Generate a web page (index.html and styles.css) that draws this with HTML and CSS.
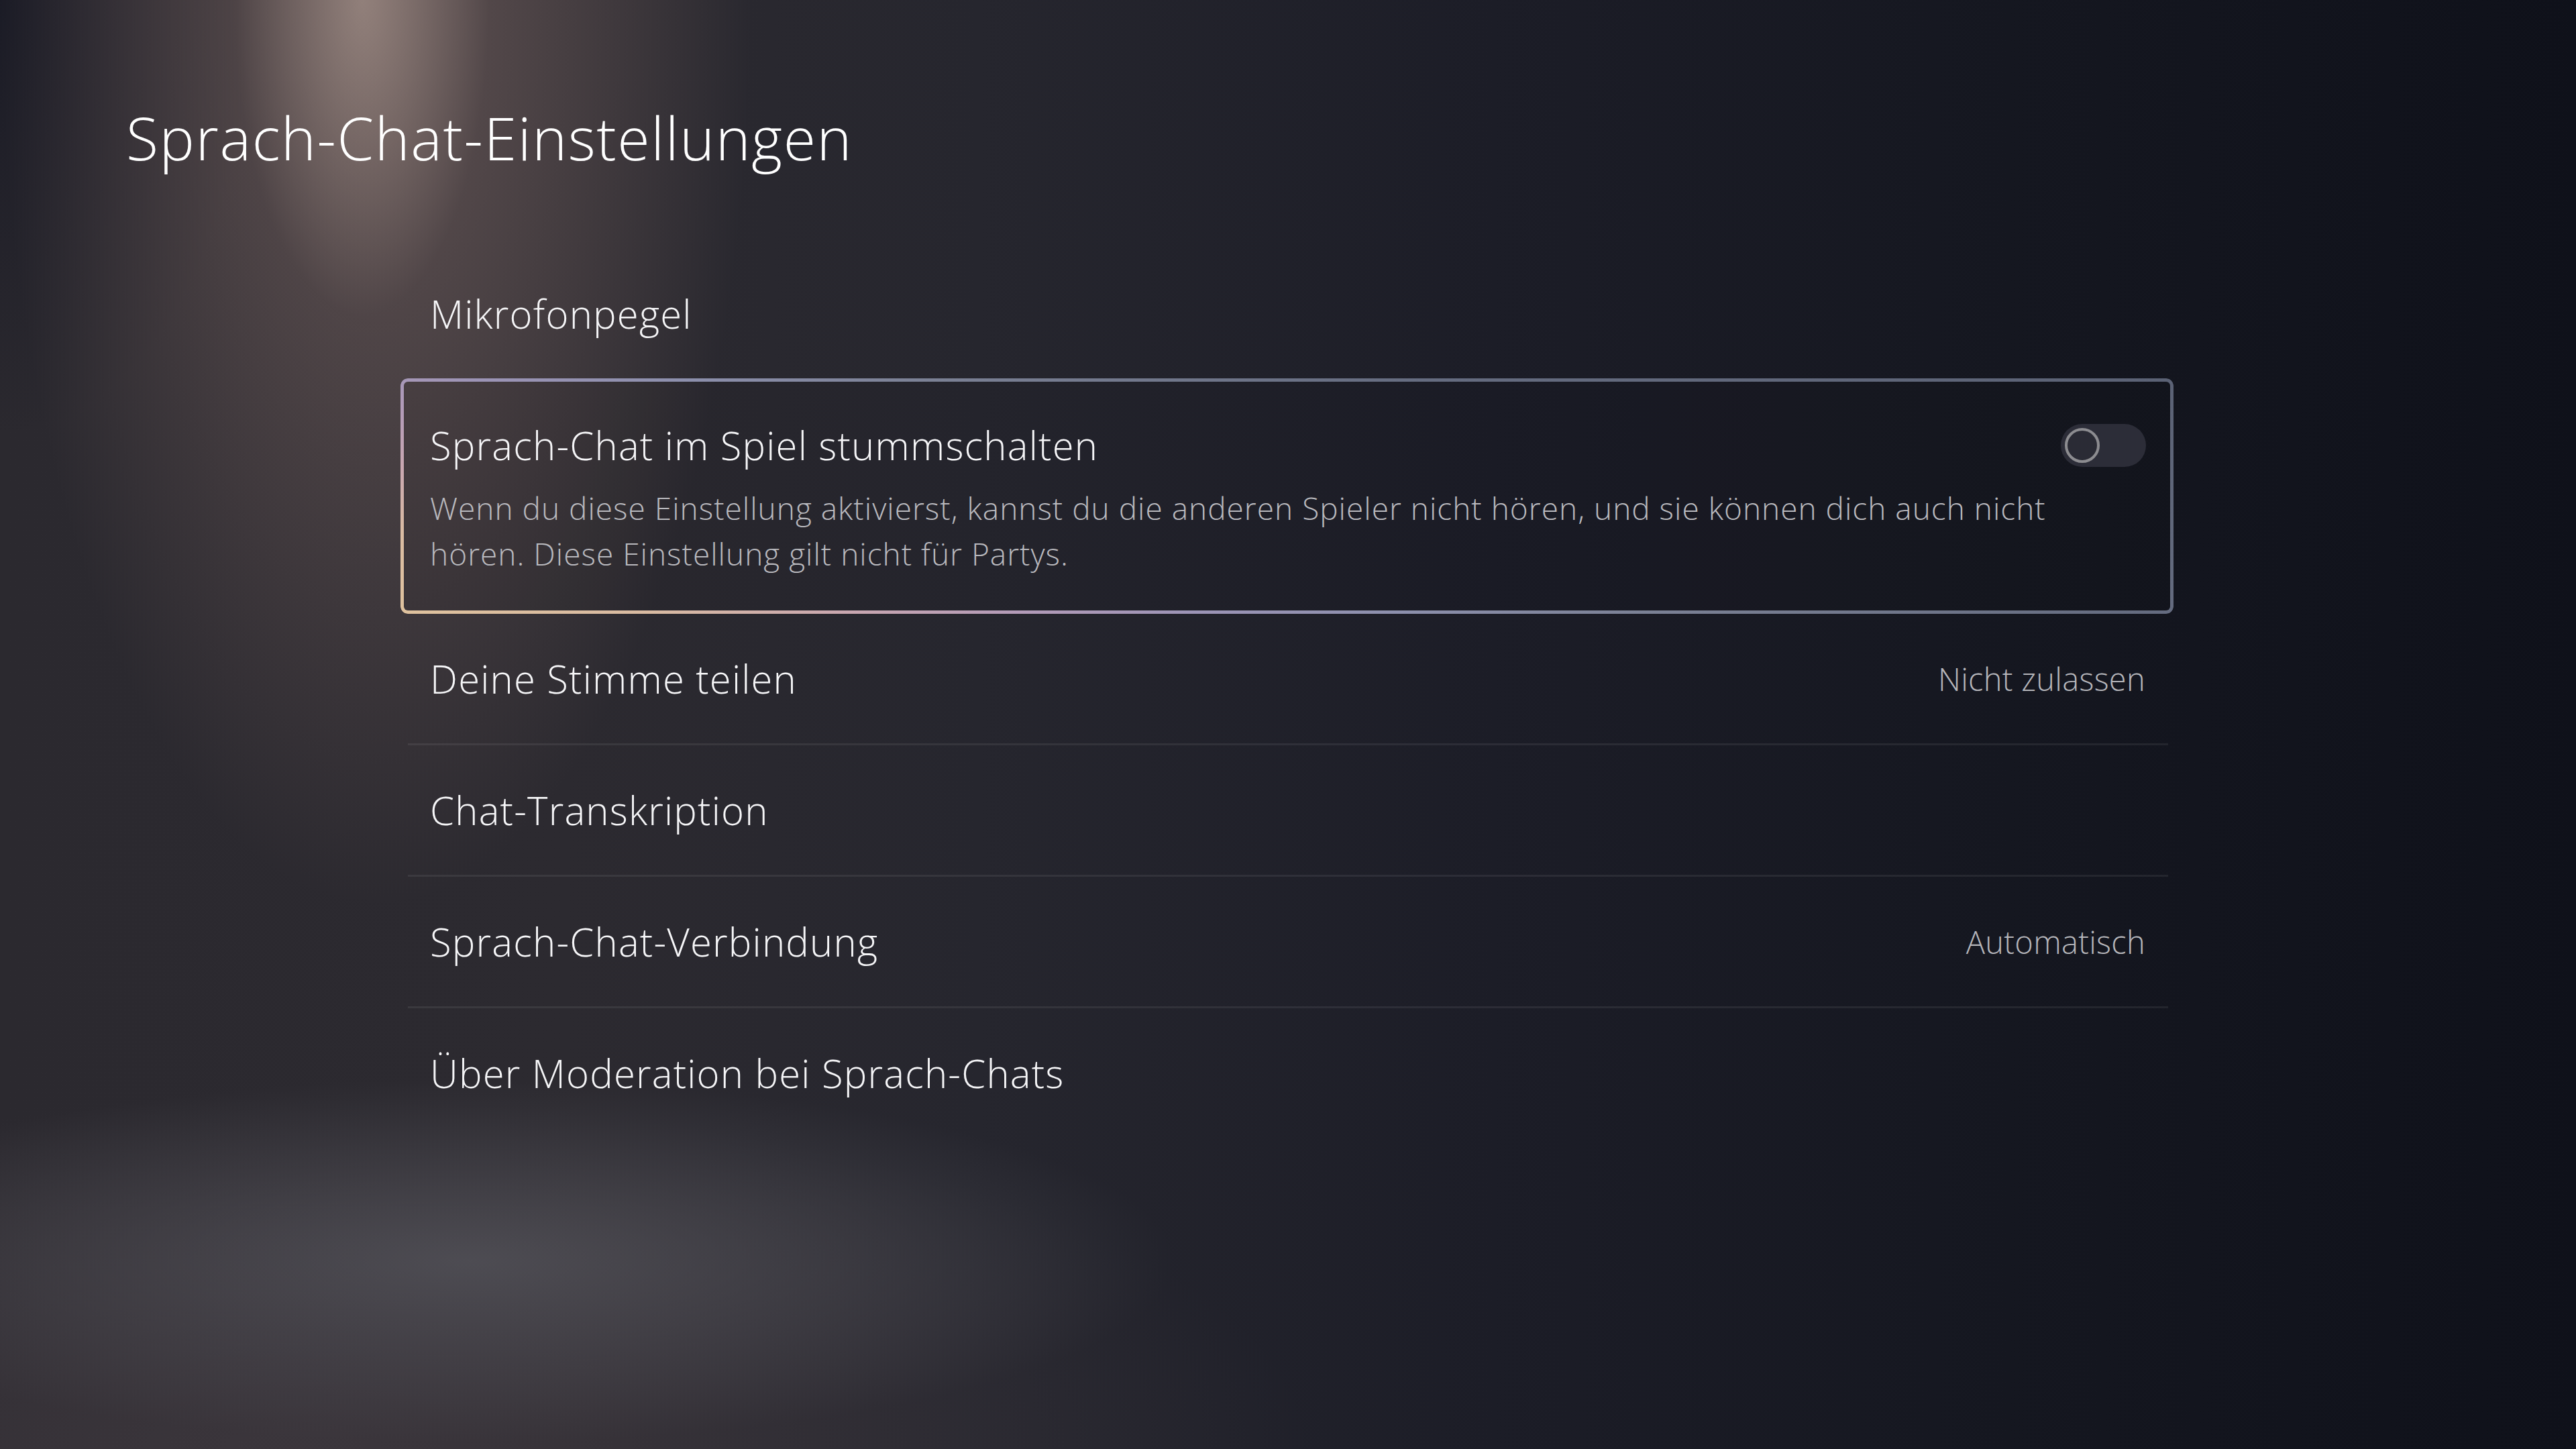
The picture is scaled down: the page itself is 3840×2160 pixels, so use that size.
FILE: index.html
```html
<!DOCTYPE html>
<html lang="de">
<head>
  <meta charset="UTF-8">
  <meta name="viewport" content="width=device-width, initial-scale=1.0">
  <title>Sprach-Chat-Einstellungen</title>
  <link rel="stylesheet" href="styles.css">
</head>
<body>
  <div class="screen">
    <h1 class="page-title">Sprach-Chat-Einstellungen</h1>

    <div class="settings">
      <div class="row">
        <span class="row-label">Mikrofonpegel</span>
      </div>

      <div class="row row-focused">
        <div class="row-head">
          <span class="row-label">Sprach-Chat im Spiel stummschalten</span>
          <div class="toggle"><div class="toggle-knob"></div></div>
        </div>
        <p class="row-desc">Wenn du diese Einstellung aktivierst, kannst du die anderen Spieler nicht hören, und sie können dich auch nicht hören. Diese Einstellung gilt nicht für Partys.</p>
      </div>

      <div class="row">
        <span class="row-label">Deine Stimme teilen</span>
        <span class="row-value">Nicht zulassen</span>
      </div>
      <div class="divider"></div>
      <div class="row">
        <span class="row-label">Chat-Transkription</span>
      </div>
      <div class="divider"></div>
      <div class="row">
        <span class="row-label">Sprach-Chat-Verbindung</span>
        <span class="row-value">Automatisch</span>
      </div>
      <div class="divider"></div>
      <div class="row">
        <span class="row-label">Über Moderation bei Sprach-Chats</span>
      </div>
    </div>
  </div>
</body>
</html>
```

FILE: styles.css
```css
html, body {
  margin: 0;
  padding: 0;
}

body {
  width: 3840px;
  height: 2160px;
  overflow: hidden;
  font-family: "Open Sans", "Noto Sans", sans-serif;
  font-weight: 300;
  color: #f4f4f6;
  background:
    /* spotlight from the top */
    radial-gradient(ellipse 190px 470px at 540px 0, rgba(185, 165, 155, 0.55), rgba(185, 165, 155, 0) 100%),
    radial-gradient(ellipse 560px 1350px at 560px 0, rgba(135, 112, 108, 0.6), rgba(135, 112, 108, 0) 100%),
    /* dark top-left corner */
    radial-gradient(ellipse 380px 650px at 0 0, rgba(24, 25, 36, 0.85), rgba(24, 25, 36, 0) 100%),
    /* floor glow */
    radial-gradient(ellipse 1050px 270px at 700px 1880px, rgba(95, 95, 102, 0.6), rgba(95, 95, 102, 0) 100%),
    radial-gradient(ellipse 1500px 520px at 450px 2160px, rgba(72, 64, 70, 0.55), rgba(72, 64, 70, 0) 100%),
    linear-gradient(90deg, #2b292f 0%, #2c2a30 22%, #26262e 38%, #1c1d27 58%, #151720 78%, #0f111a 100%);
}

.screen {
  padding: 145px 0 0 188px;
}

.page-title {
  margin: 0;
  font-size: 88px;
  font-weight: 300;
  line-height: 120px;
  letter-spacing: 1.6px;
  color: #ffffff;
}

.settings {
  width: 2643px;
  margin: 106px 0 0 409px;
  display: flex;
  flex-direction: column;
}

.row {
  height: 193px;
  box-sizing: border-box;
  padding: 0 42px 0 44px;
  display: flex;
  align-items: center;
  justify-content: space-between;
}

.row-label {
  font-size: 58px;
  letter-spacing: 1.2px;
  color: #f6f6f8;
}

.row-value {
  font-size: 47px;
  letter-spacing: 0.3px;
  color: #b6b6bb;
}

.divider {
  height: 3px;
  margin: 0 8px 0 11px;
  background-color: rgba(255, 255, 255, 0.07);
}

.row-focused {
  position: relative;
  height: 351px;
  padding: 4px 41px 0 44px;
  flex-direction: column;
  align-items: stretch;
  justify-content: center;
  border-radius: 11px;
  background-color: rgba(0, 0, 0, 0.04);
}

/* gradient outline of the focused item */
.row-focused::before {
  content: "";
  position: absolute;
  inset: 0;
  padding: 5px;
  border-radius: 11px;
  background: linear-gradient(18deg, #dfc29e 0%, #d9bba2 10%, #c9a7b0 18%, #b39bb8 25%, #9c94b6 32%, #8d90ad 40%, #7b8195 50%, #656c80 70%, #5b6275 100%);
  -webkit-mask: linear-gradient(#000 0 0) content-box, linear-gradient(#000 0 0);
  -webkit-mask-composite: xor;
  mask-composite: exclude;
  pointer-events: none;
}

.row-head {
  display: flex;
  align-items: center;
  justify-content: space-between;
}

.row-desc {
  margin: 20px 0 0 0;
  max-width: 2500px;
  font-size: 46px;
  line-height: 68px;
  letter-spacing: 1px;
  color: #b9b9be;
}

.toggle {
  width: 127px;
  height: 64px;
  border-radius: 32px;
  background-color: #2c2d38;
  display: flex;
  align-items: center;
  padding-left: 6px;
  box-sizing: border-box;
}

.toggle-knob {
  width: 52px;
  height: 52px;
  box-sizing: border-box;
  border: 4px solid #8c8c90;
  border-radius: 50%;
  background-color: #2a2b35;
}
```
